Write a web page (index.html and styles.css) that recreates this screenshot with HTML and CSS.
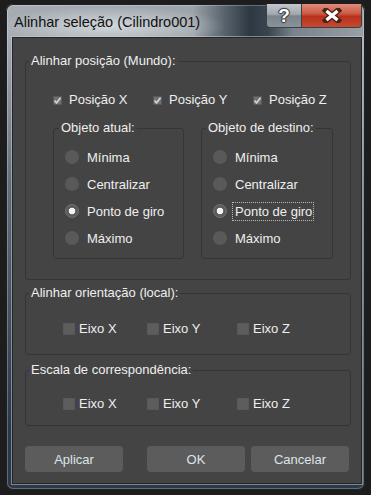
FILE: index.html
```html
<!DOCTYPE html>
<html lang="pt">
<head>
  <meta charset="UTF-8">
  <title>Alinhar seleção</title>
  <link rel="stylesheet" href="styles.css">
</head>
<body>

  <!-- Dialog window -->
  <div class="window">
    <div class="titlebar">
      <div class="title">Alinhar seleção (Cilindro001)</div>
      <div class="caption-btns">
        <span class="cap-btn help">?</span>
        <span class="cap-btn close">
          <svg width="20" height="15" viewBox="0 0 20 15">
            <path d="M4 2.5 L16 12.5 M16 2.5 L4 12.5" stroke="#4a2418" stroke-width="6" stroke-linecap="square"/>
            <path d="M4.5 3 L15.5 12 M15.5 3 L4.5 12" stroke="#fff" stroke-width="3.4"/>
          </svg>
        </span>
      </div>
    </div>

    <div class="client">

      <!-- Position -->
      <fieldset class="group group-pos">
        <legend>Alinhar posição (Mundo):</legend>
        <div class="check-row row-pos">
          <label class="check on"><span class="box"><svg width="9" height="9" viewBox="0 0 9 9"><path d="M1.5 4.5 L3.5 6.8 L7.6 1.8" stroke="#cfcfcf" stroke-width="1.8" fill="none"/></svg></span>Posição X</label>
          <label class="check on"><span class="box"><svg width="9" height="9" viewBox="0 0 9 9"><path d="M1.5 4.5 L3.5 6.8 L7.6 1.8" stroke="#cfcfcf" stroke-width="1.8" fill="none"/></svg></span>Posição Y</label>
          <label class="check on"><span class="box"><svg width="9" height="9" viewBox="0 0 9 9"><path d="M1.5 4.5 L3.5 6.8 L7.6 1.8" stroke="#cfcfcf" stroke-width="1.8" fill="none"/></svg></span>Posição Z</label>
        </div>

        <div class="sub-groups">
          <fieldset class="group sub sub-left">
            <legend>Objeto atual:</legend>
            <div class="radio-list">
              <label class="radio"><span class="dot"></span>Mínima</label>
              <label class="radio"><span class="dot"></span>Centralizar</label>
              <label class="radio on"><span class="dot"></span>Ponto de giro</label>
              <label class="radio"><span class="dot"></span>Máximo</label>
            </div>
          </fieldset>

          <fieldset class="group sub sub-right">
            <legend>Objeto de destino:</legend>
            <div class="radio-list">
              <label class="radio"><span class="dot"></span>Mínima</label>
              <label class="radio"><span class="dot"></span>Centralizar</label>
              <label class="radio on"><span class="dot"></span><span class="focus">Ponto de giro</span></label>
              <label class="radio"><span class="dot"></span>Máximo</label>
            </div>
          </fieldset>
        </div>
      </fieldset>

      <!-- Orientation -->
      <fieldset class="group group-orient">
        <legend>Alinhar orientação (local):</legend>
        <div class="check-row row-axis">
          <label class="check"><span class="box"></span>Eixo X</label>
          <label class="check"><span class="box"></span>Eixo Y</label>
          <label class="check"><span class="box"></span>Eixo Z</label>
        </div>
      </fieldset>

      <!-- Scale -->
      <fieldset class="group group-scale">
        <legend>Escala de correspondência:</legend>
        <div class="check-row row-axis">
          <label class="check"><span class="box"></span>Eixo X</label>
          <label class="check"><span class="box"></span>Eixo Y</label>
          <label class="check"><span class="box"></span>Eixo Z</label>
        </div>
      </fieldset>

      <div class="buttons">
        <button class="btn btn-apply">Aplicar</button>
        <button class="btn btn-ok">OK</button>
        <button class="btn">Cancelar</button>
      </div>

    </div>
  </div>

</body>
</html>
```

FILE: styles.css
```css
body {
  margin: 0;
  background: #1d1d1d;
  font-family: 'Liberation Sans', Arial, sans-serif;
  font-size: 13px;
  color: #efefef;
}

/* Window frame */
.window {
  box-sizing: border-box;
  width: 359px;
  height: 486px;
  margin: 4px 0 0 6px;
  padding: 0 3px 5px 6px;
  border-radius: 7px;
  display: flex;
  flex-direction: column;
  background:
    radial-gradient(115px 20px at 105px 22px, rgba(228,232,236,0.75), rgba(228,232,236,0)),
    linear-gradient(180deg, rgba(46,57,70,0) 0, rgba(46,57,70,0) 30px, rgba(46,57,70,0.55) 180px, #2e3946 420px),
    linear-gradient(90deg, #a6acb1 0%, #9ca3a9 52%, #58626c 61%, #2e3843 68%, #3a444e 73%, #7a828a 80%, #99a0a6 100%);
  box-shadow: inset 0 0 0 1px #1b2128, inset 0 0 0 2px rgba(255,255,255,0.25);
}

.titlebar {
  height: 33px;
  display: flex;
  align-items: flex-start;
  flex-shrink: 0;
}

.title {
  padding: 10px 0 0 2px;
  font-size: 14.5px;
  line-height: 17px;
  color: #111;
}

.caption-btns {
  margin-left: auto;
  display: flex;
}

.cap-btn {
  box-sizing: border-box;
  height: 24px;
  display: flex;
  align-items: center;
  justify-content: center;
  border: 1px solid #3a4048;
  border-top: none;
}

.help {
  width: 35px;
  border-radius: 0 0 0 4px;
  border-right: none;
  background: linear-gradient(180deg, #c2c8cd 0%, #a0a8ae 45%, #7b848c 52%, #8a9299 100%);
  color: #fff;
  font-weight: bold;
  font-size: 19px;
  line-height: 22px;
  text-shadow: 1px 0 1px #333, -1px 0 1px #333, 0 1px 1px #333, 0 -1px 1px #333;
}

.close {
  width: 61px;
  border-radius: 0 0 4px 0;
  background: linear-gradient(180deg, #dd8c7c 0%, #cc5a44 42%, #b8301a 54%, #c54a32 100%);
}

/* Client area */
.client {
  box-sizing: border-box;
  height: 447px;
  background: #444444;
  border: 1px solid #262626;
  box-shadow: 0 0 0 1px rgba(200,214,228,0.5);
  padding: 0 10px 0 12px;
  display: flex;
  flex-direction: column;
}

/* Group boxes */
.group {
  margin: 0;
  padding: 0;
  min-width: 0;
  border: 1px solid #353535;
  border-radius: 3px;
}

.group legend {
  margin-left: 3px;
  padding: 0 2px;
  line-height: 16px;
}

.group-pos {
  margin-top: 15px;
  padding-bottom: 20px;
}

.group-orient {
  margin-top: 5px;
  padding-bottom: 17px;
}

.group-scale {
  margin-top: 7px;
  padding-bottom: 13px;
}

.group-orient .check-row {
  margin-top: 20px;
}

.group-scale .check-row {
  margin-top: 18px;
}

/* Checkboxes */
.check-row {
  display: grid;
  line-height: 16px;
}

.row-pos {
  margin-top: 23px;
  padding-left: 27px;
  grid-template-columns: 100px 100px auto;
}

.row-axis {
  padding-left: 37px;
  grid-template-columns: 84px 90px auto;
}

.check {
  display: flex;
  align-items: center;
}

.check .box {
  width: 12px;
  height: 12px;
  margin-right: 4px;
  background: #5d5d5d;
  box-shadow: inset 0 0 0 1px #585858;
}

.check.on .box {
  width: 9px;
  height: 9px;
  margin-right: 7px;
  background: #707070;
  display: flex;
}

/* Sub group boxes */
.sub-groups {
  display: flex;
  margin-top: 12px;
  padding-left: 27px;
  gap: 17px;
}

.sub legend {
  margin-left: 5px;
}

.sub-left {
  width: 131px;
  box-sizing: border-box;
}

.sub-right {
  width: 132px;
  box-sizing: border-box;
}

.sub-right legend {
  margin-left: 4px;
}

.radio-list {
  display: flex;
  flex-direction: column;
  gap: 9px;
  padding: 12px 0 11px 11px;
}

.radio {
  display: flex;
  align-items: center;
  height: 18px;
}

.radio .dot {
  box-sizing: border-box;
  width: 14px;
  height: 14px;
  margin-right: 8px;
  border-radius: 50%;
  background: #595959;
}

.radio.on .dot {
  background: radial-gradient(circle, #f4f4f4 0, #f4f4f4 3px, #5c5c5c 3.6px);
  border: 1px solid #727272;
}

.focus {
  margin-left: -3px;
  padding: 1px 1px 1px 2px;
  border: 1px dotted #b8b8b8;
  line-height: 15px;
}

/* Bottom buttons */
.buttons {
  display: flex;
  margin-top: 20px;
}

.btn {
  width: 98px;
  height: 26px;
  border: none;
  border-radius: 4px;
  background: #5c5c5c;
  color: #dfe4ea;
  font-family: 'Liberation Sans', Arial, sans-serif;
  font-size: 13px;
  cursor: pointer;
}

.btn-apply {
  margin-right: 24px;
}

.btn-ok {
  margin-right: 6px;
}
```
